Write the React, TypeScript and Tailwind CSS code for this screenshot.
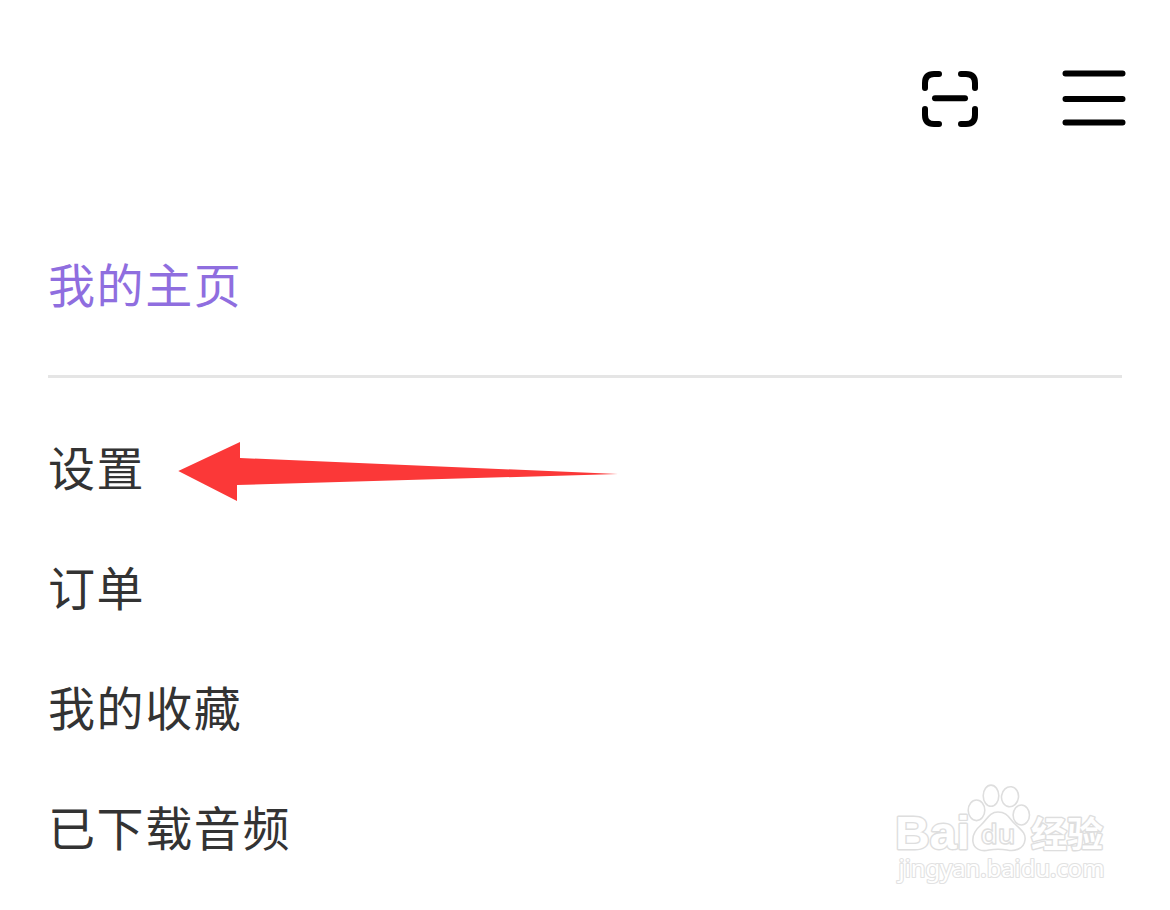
function ScanIcon() {
  return (
    <svg width="58" height="58" viewBox="0 0 58 58" fill="none" stroke="#000" strokeWidth="6" strokeLinecap="round" aria-label="扫一扫">
      <path d="M4 18V13Q4 4 13 4H18" />
      <path d="M40 4H45Q54 4 54 13V18" />
      <path d="M4 39V45Q4 54 13 54H18" />
      <path d="M40 54H45Q54 54 54 45V39" />
      <path d="M14 28.3H44" />
    </svg>
  );
}

function MenuIcon() {
  return (
    <svg width="64" height="58" viewBox="0 0 64 58" stroke="#000" strokeWidth="6" strokeLinecap="round" aria-label="菜单">
      <path d="M3.5 3.5H60.5M3.5 29H60.5M3.5 52.5H60.5" />
    </svg>
  );
}

function Arrow() {
  return (
    <svg className="ml-[32.5px] shrink-0" width="442" height="60" viewBox="0 0 442 60" fill="#fb3838">
      <path d="M0.3 30L62 1V17L440 33L59 44V60Z" />
    </svg>
  );
}

function Watermark() {
  return (
    <svg
      className="absolute left-[890px] top-[778px] tracking-normal"
      width="225"
      height="122"
      viewBox="890 778 225 122"
      fill="#fff"
      stroke="#dedede"
      strokeWidth="1.6"
      strokeLinejoin="round"
    >
      <g paintOrder="stroke" strokeWidth="2.8">
        <text x="895" y="849" fontSize="46" fontWeight="700" fontFamily="'Liberation Sans', sans-serif" textLength="75" lengthAdjust="spacingAndGlyphs">Bai</text>
        <text x="1031" y="846.5" fontSize="35" fontWeight="700" fontFamily="'Noto Sans CJK SC', sans-serif" textLength="72" lengthAdjust="spacingAndGlyphs">经验</text>
        <text x="898.5" y="877" fontSize="23" fontFamily="'Noto Sans', sans-serif" stroke="#e2e2e2" strokeWidth="2.2" textLength="206" lengthAdjust="spacingAndGlyphs">jingyan.baidu.com</text>
      </g>
      <ellipse cx="976.5" cy="810.3" rx="8.3" ry="10.3" />
      <ellipse cx="991" cy="795.7" rx="7.8" ry="10.6" />
      <ellipse cx="1010" cy="796.7" rx="8.5" ry="10" transform="rotate(8 1010 796.7)" />
      <ellipse cx="1021.3" cy="815" rx="8.2" ry="10" />
      <path d="M998 812C989 812 987 820 981 825C975 830 972 835 973 842C974 849 981 852 989 850C995 849 1001 849 1007 850C1016 852 1024 848 1025 840C1026 833 1021 830 1016 825C1009 819 1008 812 998 812Z" />
      <text x="980.5" y="844" fontSize="27" fontWeight="600" fontFamily="'Noto Sans', sans-serif" strokeWidth="1.4" textLength="35" lengthAdjust="spacingAndGlyphs">du</text>
    </svg>
  );
}

const items = ['设置', '订单', '我的收藏', '已下载音频'];

export default function App() {
  return (
    <div className="relative flex h-[910px] w-[1170px] flex-col overflow-hidden bg-white px-12 font-['Noto_Sans_CJK_SC',sans-serif] text-[47px] leading-none tracking-[1.6px] text-[#333]">
      <header className="-mr-1 flex h-[198px] items-center justify-end gap-[83px]">
        <ScanIcon />
        <MenuIcon />
      </header>
      <a className="flex h-[177px] items-center pb-[9px] text-[#8f6edf]">我的主页</a>
      <hr className="h-[3px] shrink-0 border-0 bg-[#e5e5e5]" />
      <nav className="flex flex-col pt-[33px]">
        {items.map((label, i) => (
          <a key={label} className="flex h-[120px] items-center">
            <span className="pb-[12px]">{label}</span>
            {i === 0 && <Arrow />}
          </a>
        ))}
      </nav>
      <Watermark />
    </div>
  );
}
